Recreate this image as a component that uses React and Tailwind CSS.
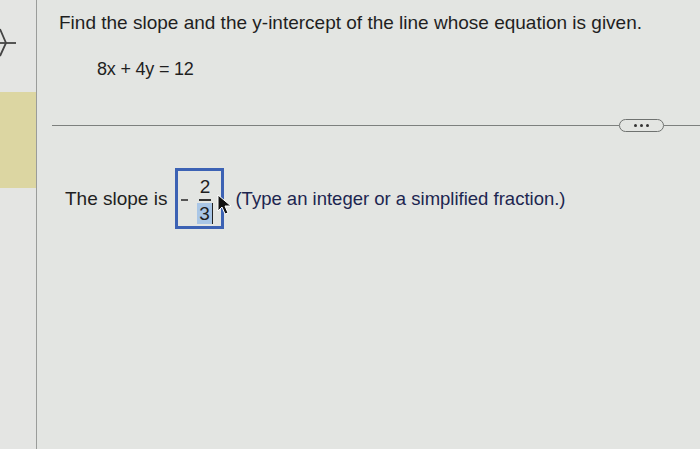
import React from "react";

export default function App() {
  return (
    <div
      className="w-[700px] h-[449px] overflow-hidden flex bg-[#e3e5e2]"
      style={{ fontFamily: '"Liberation Sans", Arial, sans-serif' }}
    >
      {/* left sidebar */}
      <div className="w-[37px] shrink-0 border-r border-[#9a9c9a] flex flex-col bg-[#e4e5e3]">
        <div className="h-[92px] pt-[26px]">
          <svg width="16" height="32" viewBox="0 0 16 32" className="block">
            <path d="M0 17 H16" stroke="#444" strokeWidth="1.8" />
            <path d="M0 3 L6 17 L0 30" stroke="#444" strokeWidth="1.8" fill="none" />
          </svg>
        </div>
        <div className="h-[96px] bg-[#dcd6a2]" />
      </div>

      {/* main */}
      <div className="flex-1 flex flex-col">
        <div className="pl-[22px] pt-[12px] text-[19px] leading-[22px] text-[#1f1f1f] whitespace-nowrap">
          Find the slope and the y-intercept of the line whose equation is given.
        </div>
        <div className="pl-[60px] mt-[25px] text-[18px] leading-[20px] text-[#1f1f1f] tracking-[-0.2px]">
          8x + 4y = 12
        </div>

        <div className="mt-[40px] pl-[15px] flex items-center">
          <div className="flex-1 h-[1.5px] bg-[#7d807e]" />
          <div className="w-[45px] h-[13px] rounded-full border-[1.5px] border-[#6f7270] flex items-center justify-center gap-[3px]">
            <span className="w-[3px] h-[3px] rounded-full bg-[#333]" />
            <span className="w-[3px] h-[3px] rounded-full bg-[#333]" />
            <span className="w-[3px] h-[3px] rounded-full bg-[#333]" />
          </div>
          <div className="w-[36px] h-[1.5px] bg-[#7d807e]" />
        </div>

        <div className="mt-[36px] pl-[28px] flex items-center">
          <span className="text-[19px] leading-[22px] text-[#1f1f1f] mr-[8px] whitespace-nowrap">The slope is</span>
          <div className="relative shrink-0 w-[49px] h-[61px] border-[3px] border-[#3c62b4] flex items-center pl-[3px]">
            <div className="w-[7px] h-[1.5px] bg-[#555] mr-[7px] mt-[3px]" />
            <div className="flex flex-col items-center w-[19px] mt-[3px]">
              <span className="text-[19px] leading-[21px] text-[#1f1f1f]">2</span>
              <div className="w-[12px] h-[1.5px] bg-[#333] my-[2px]" />
              <span className="text-[19px] leading-[21px] text-[#1f1f1f] bg-[#a9c6e6] px-[2px] border-r-[1.5px] border-[#222]">3</span>
            </div>
            <svg
              width="16"
              height="22"
              viewBox="0 0 16 22"
              className="absolute left-[39px] top-[23px]"
            >
              <path d="M1 1 L1 17 L5 13 L8 20 L11 19 L8 12 L14 12 Z" fill="#111" stroke="#fff" strokeWidth="1" />
            </svg>
          </div>
          <span className="ml-[11px] text-[18.5px] leading-[22px] text-[#1d2650] whitespace-nowrap">
            (Type an integer or a simplified fraction.)
          </span>
        </div>
      </div>
    </div>
  );
}
